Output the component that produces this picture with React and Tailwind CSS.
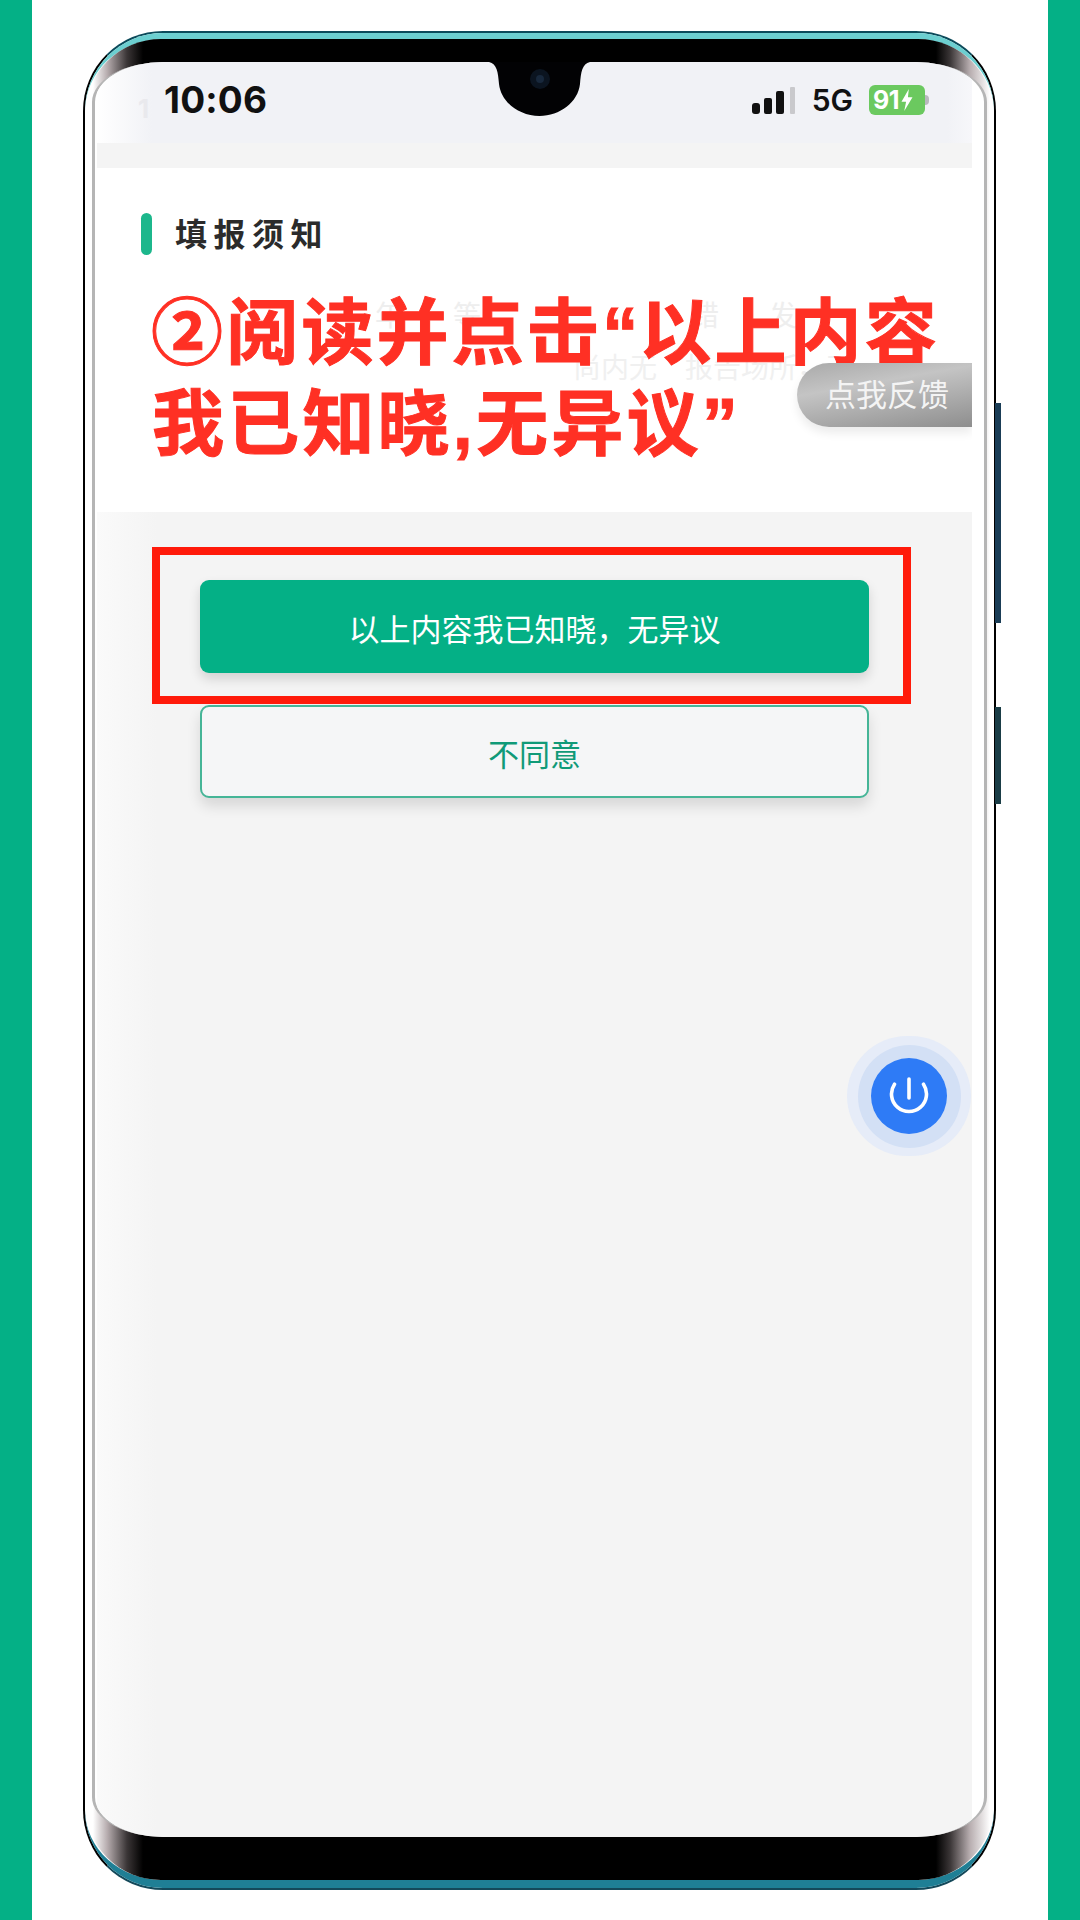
function SignalIcon() {
  return (
    <svg width="43" height="27" viewBox="0 0 43 27">
      <rect x="0" y="16" width="8" height="11" rx="3" fill="#111" />
      <rect x="12" y="11" width="8" height="16" rx="2" fill="#111" />
      <rect x="24" y="4" width="8" height="23" rx="2" fill="#111" />
      <rect x="38" y="0" width="5" height="27" rx="1" fill="#c9c9cc" />
    </svg>
  );
}

function Battery() {
  return (
    <div className="flex items-center">
      <div className="flex h-[30px] w-[56px] items-center gap-[1px] rounded-[6px] bg-[#6bc95f] pl-[4px]">
        <span className="text-[25px] leading-none font-bold tracking-[-0.5px] text-white">91</span>
        <svg width="14" height="22" viewBox="0 0 14 24">
          <path d="M9 0 1 14h5l-2 10 9-15H8z" fill="#fff" />
        </svg>
      </div>
      <div className="h-[10px] w-[4px] rounded-r-full bg-[#b9b9bd]" />
    </div>
  );
}

function StatusBar() {
  return (
    <div className="flex h-[81px] shrink-0 items-start bg-[linear-gradient(90deg,#ffffff,#f1f2f6_55px,#f1f2f6_850px,#f7f7fa)] pt-[20px] pl-[41px] font-['Inter',sans-serif]">
      <span className="mt-[14px] w-[26px] text-[26px] leading-none font-bold text-[#e9e9ed]">1</span>
      <span className="-mt-[1px] text-[37px] leading-[38px] font-bold tracking-[0.2px] text-[#111]">10:06</span>
      <div className="mt-[3px] mr-[43px] ml-auto flex items-center">
        <SignalIcon />
        <span className="ml-[17px] text-[30px] leading-none font-semibold text-[#111]">5G</span>
        <div className="ml-[16px]">
          <Battery />
        </div>
      </div>
    </div>
  );
}

function Notch() {
  return (
    <svg className="absolute top-0 left-[392px]" width="101" height="54" viewBox="0 0 101 54">
      <path d="M0 0C8 2 9 10 10 22 12 40 30 54 50.5 54 71 54 89 40 91 22 92 10 93 2 101 0Z" fill="#020204" />
      <circle cx="51" cy="17" r="10" fill="#0b1420" />
      <circle cx="51" cy="17" r="4" fill="#18283c" />
    </svg>
  );
}

function NoticeCard() {
  return (
    <div className="relative h-[344px] shrink-0 bg-white">
      <div className="flex items-center gap-[23px] pt-[45px] pl-[44px]">
        <div className="h-[42px] w-[11px] rounded-full bg-[#1cb78c]" />
        <span className="-mt-[5px] text-[32px] leading-[42px] font-bold tracking-[6.5px] text-[#2b2b2b]">填报须知</span>
      </div>
      {/* text of the page, showing faintly behind the red caption */}
      <div className="absolute top-[128px] left-[278px] flex gap-[50px] text-[28px] leading-[36px] text-[#eeeeee]">
        <span>年</span>
        <span>等</span>
        <span className="ml-[160px]">错</span>
        <span>发</span>
      </div>
      <div className="absolute top-[180px] left-[476px] text-[28px] leading-[36px] text-[#f0f0f0]">尚内无　报告场所，无</div>
      <div className="absolute top-[113px] left-[54px] text-[72px] font-bold tracking-[3.2px] whitespace-nowrap text-[#ff3024] [-webkit-text-stroke:1px_#ff3024]">
        <div className="h-[91px] leading-[91px]">
          ②阅读并点击<span className="font-['Liberation_Sans',sans-serif] tracking-[1px]">“</span>以上内容
        </div>
        <div className="h-[91px] pl-[1px] leading-[91px]">
          我已知晓<span className="font-['Liberation_Sans',sans-serif]">,</span>无异议
          <span className="font-['Liberation_Sans',sans-serif]">”</span>
        </div>
      </div>
      <div className="absolute top-[195px] right-0 flex h-[64px] w-[175px] items-center rounded-l-[32px] bg-[linear-gradient(170deg,#a9a9a9,#c4c4c4_35%,#8e8e8e)] pb-[6px] pl-[28px] shadow-[0_6px_10px_rgba(0,0,0,0.08)]">
        <span className="text-[31px] leading-none text-[#f4f4f4]">点我反馈</span>
      </div>
    </div>
  );
}

function PowerButton() {
  return (
    <div className="absolute top-[974px] left-[750px] flex h-[120px] w-[124px] items-center justify-center rounded-full bg-[#e6ecf8]">
      <div className="flex h-[103px] w-[103px] items-center justify-center rounded-full bg-[#d3e0f5]">
        <div className="flex h-[76px] w-[76px] items-center justify-center rounded-full bg-[#2e7bf6]">
          <svg width="40" height="38" viewBox="0 0 40 38" fill="none" stroke="#fff" strokeWidth="3.6" strokeLinecap="round">
            <path d="M5.5 7.2a17.5 17.5 0 1 0 29 0" />
            <path d="M20 2v19" />
          </svg>
        </div>
      </div>
    </div>
  );
}

function Actions() {
  return (
    <div className="relative flex flex-1 flex-col gap-[32px] bg-[linear-gradient(90deg,#fafafa,#f4f4f4_60px)] pt-[68px] pl-[103px]">
      <button className="h-[93px] w-[669px] rounded-[9px] bg-[#04b086] pt-[3px] text-[31px] text-white shadow-[0_6px_12px_rgba(0,0,0,0.14)]">
        以上内容我已知晓，无异议
      </button>
      <button className="h-[93px] w-[669px] rounded-[9px] border-2 border-[#45b597] bg-[#f5f6f7] pt-[3px] text-[31px] text-[#109a78] shadow-[0_8px_14px_rgba(0,0,0,0.12)]">
        不同意
      </button>
      <div className="absolute top-[35px] left-[55px] h-[157px] w-[759px] border-[8px] border-[#ff1a0a]" />
    </div>
  );
}

export default function App() {
  return (
    <div className="flex h-[1920px] w-[1080px] bg-white font-['Noto_Sans_CJK_SC','Inter',sans-serif]">
      <div className="w-[32px] bg-[#04b086]" />
      <div className="flex-1 pt-[31px] pl-[51px]">
        <div className="relative h-[1859px] w-[913px]">
          <div className="h-full rounded-[80px] border-x-2 border-t-2 border-b-2 border-x-black border-t-[#0b4a5a] border-b-[#14495a]">
            <div className="h-full rounded-[78px] border-t-[6px] border-b-[8px] border-t-[#6ccfd0] border-b-[#1f7f95]">
              <div className="flex h-full flex-col overflow-hidden rounded-[76px] bg-[linear-gradient(90deg,#fff_8px,#b8aeb0_22px,#3a3536_42px,#000_58px,#000_851px,#3a3536_865px,#b8aeb0_885px,#fff_905px)] px-[7px] pt-[23px] pb-[43px]">
                <div className="flex h-full overflow-hidden rounded-[72px/40px] border-x-[3px] border-x-[#b5b5b5] bg-white">
                  <div className="relative ml-[2px] flex w-[875px] flex-col overflow-hidden">
                    <StatusBar />
                    <div className="h-[25px] shrink-0 bg-[#f4f4f4]" />
                    <NoticeCard />
                    <Actions />
                    <Notch />
                    <PowerButton />
                  </div>
                </div>
              </div>
            </div>
          </div>
          <div className="absolute top-[372px] left-[912px] h-[220px] w-[6px] bg-[#1a3d56]" />
          <div className="absolute top-[676px] left-[912px] h-[97px] w-[6px] bg-[#1a3d46]" />
        </div>
      </div>
      <div className="w-[32px] bg-[#04b086]" />
    </div>
  );
}
